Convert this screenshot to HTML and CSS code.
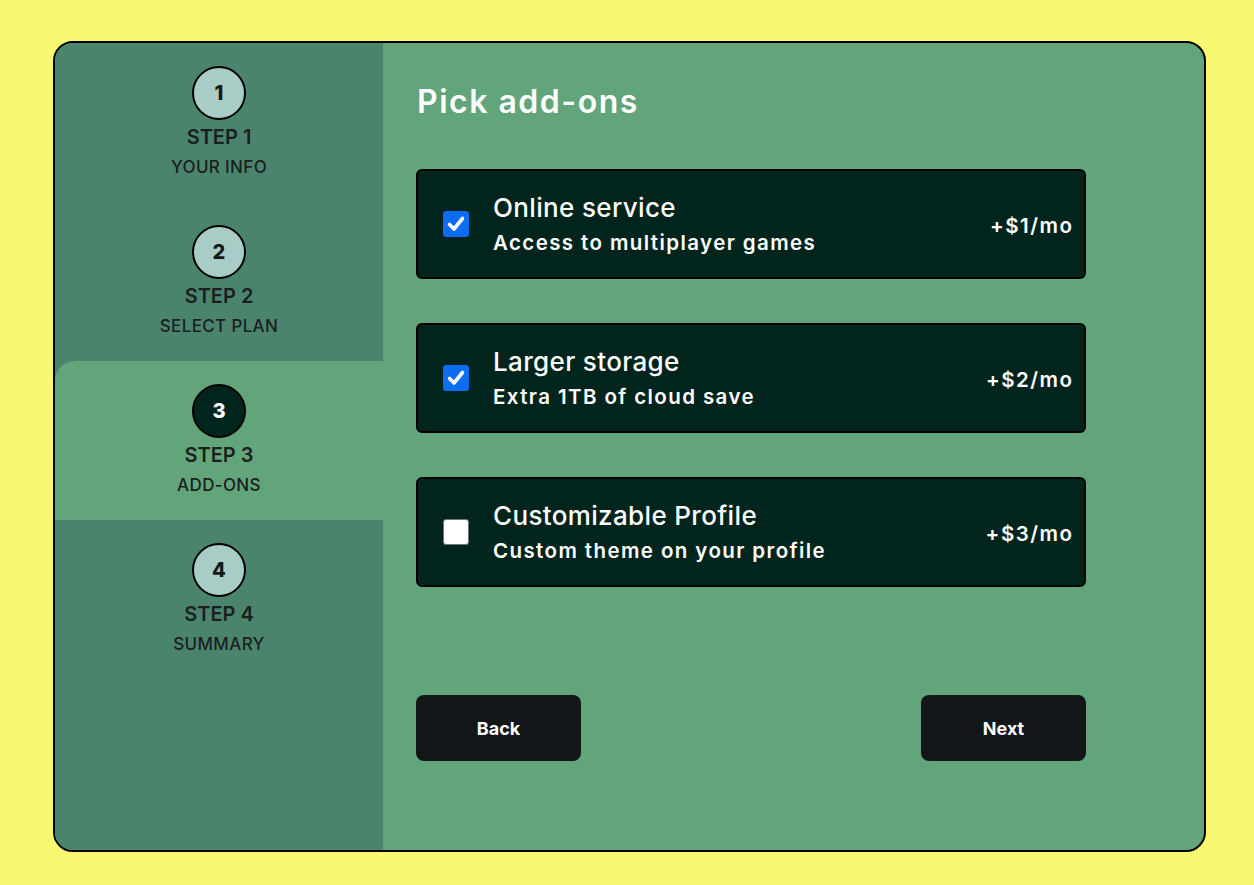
FILE: index.html
```html
<!DOCTYPE html>
<html lang="en">
<head>
<meta charset="utf-8">
<title>Pick add-ons</title>
<link rel="stylesheet" href="styles.css">
</head>
<body>
<div class="page">
  <div class="card">
    <aside class="sidebar">
      <div class="step">
        <div class="num">1</div>
        <div class="step-label">STEP 1</div>
        <div class="step-name">YOUR INFO</div>
      </div>
      <div class="step">
        <div class="num">2</div>
        <div class="step-label">STEP 2</div>
        <div class="step-name">SELECT PLAN</div>
      </div>
      <div class="step active">
        <div class="num">3</div>
        <div class="step-label">STEP 3</div>
        <div class="step-name">ADD-ONS</div>
      </div>
      <div class="step">
        <div class="num">4</div>
        <div class="step-label">STEP 4</div>
        <div class="step-name">SUMMARY</div>
      </div>
    </aside>
    <main class="main">
      <h1 class="title">Pick add-ons</h1>
      <div class="addons">
        <label class="addon">
          <span class="box checked"><svg viewBox="0 0 26 26" width="26" height="26"><path d="M6.5 13.5 L11 18 L19.5 7.5" fill="none" stroke="#fff" stroke-width="3.6" stroke-linecap="round" stroke-linejoin="round"/></svg></span>
          <span class="addon-text">
            <span class="addon-title">Online service</span>
            <span class="addon-desc">Access to multiplayer games</span>
          </span>
          <span class="price">+$1/mo</span>
        </label>
        <label class="addon">
          <span class="box checked"><svg viewBox="0 0 26 26" width="26" height="26"><path d="M6.5 13.5 L11 18 L19.5 7.5" fill="none" stroke="#fff" stroke-width="3.6" stroke-linecap="round" stroke-linejoin="round"/></svg></span>
          <span class="addon-text">
            <span class="addon-title">Larger storage</span>
            <span class="addon-desc">Extra 1TB of cloud save</span>
          </span>
          <span class="price">+$2/mo</span>
        </label>
        <label class="addon">
          <span class="box"></span>
          <span class="addon-text">
            <span class="addon-title">Customizable Profile</span>
            <span class="addon-desc">Custom theme on your profile</span>
          </span>
          <span class="price">+$3/mo</span>
        </label>
      </div>
      <div class="actions">
        <button class="btn" type="button">Back</button>
        <button class="btn" type="button">Next</button>
      </div>
    </main>
  </div>
</div>
</body>
</html>
```
FILE: styles.css
```css
* { box-sizing: border-box; }
html, body { margin: 0; padding: 0; }
body {
  background: #f9f871;
  font-family: Inter, "Noto Sans", sans-serif;
  width: 1254px;
  height: 885px;
  overflow: hidden;
}
.page { padding: 41px 0 0 53px; }
.card {
  width: 1153px;
  height: 811px;
  border: 2px solid #000;
  border-radius: 20px;
  overflow: hidden;
  display: grid;
  grid-template-columns: 328px 1fr;
  background: #62a57a;
}
.sidebar {
  background: #4a846d;
  display: flex;
  flex-direction: column;
}
.step {
  height: 159px;
  display: flex;
  flex-direction: column;
  align-items: center;
  padding-top: 23px;
  color: #1b1f1f;
}
.step.active {
  background: #62a57a;
  border-top-left-radius: 20px;
}
.num {
  width: 54px;
  height: 54px;
  border-radius: 50%;
  border: 2px solid #000;
  background: #a7cdc6;
  display: flex;
  align-items: center;
  justify-content: center;
  font-size: 20px;
  font-weight: 800;
  color: #141a1a;
}
.step.active .num { background: #01241d; color: #fff; }
.step-label {
  margin-top: 4px;
  font-size: 20px;
  font-weight: 600;
  line-height: 26px;
}
.step-name {
  margin-top: 7px;
  font-size: 17px;
  font-weight: 500;
  line-height: 20px;
  letter-spacing: 0.35px;
}
.main {
  padding: 0 118px 0 33px;
  display: flex;
  flex-direction: column;
}
.title {
  margin: 39px 0 0 1px;
  font-size: 32px;
  font-weight: 600;
  line-height: 40px;
  letter-spacing: 1.5px;
  color: #fff;
}
.addons {
  margin-top: 47px;
  display: flex;
  flex-direction: column;
  gap: 44px;
}
.addon {
  height: 110px;
  background: #01241d;
  border: 2px solid #000;
  border-radius: 6px;
  display: flex;
  align-items: center;
  padding: 0 12px 0 25px;
  color: #fff;
}
.box {
  width: 26px;
  height: 26px;
  border-radius: 3px;
  background: #fff;
  border: 1px solid #767676;
  flex: none;
  display: flex;
}
.box.checked { background: #0b6cf4; border: none; }
.addon-text {
  margin-left: 24px;
  display: flex;
  flex-direction: column;
  flex: 1;
}
.addon-title {
  font-size: 26px;
  font-weight: 500;
  line-height: 32px;
  letter-spacing: 0.35px;
}
.addon-desc {
  margin-top: 6px;
  font-size: 20.5px;
  font-weight: 600;
  line-height: 26px;
  letter-spacing: 1.4px;
}
.price {
  font-size: 20.5px;
  font-weight: 600;
  letter-spacing: 1.5px;
  margin-right: -1.5px;
  margin-top: 2px;
}
.actions {
  margin-top: 108px;
  display: flex;
  justify-content: space-between;
}
.btn {
  width: 165px;
  height: 66px;
  border: none;
  border-radius: 8px;
  background: #131619;
  color: #fff;
  font-family: inherit;
  font-size: 18px;
  font-weight: 700;
}
```
